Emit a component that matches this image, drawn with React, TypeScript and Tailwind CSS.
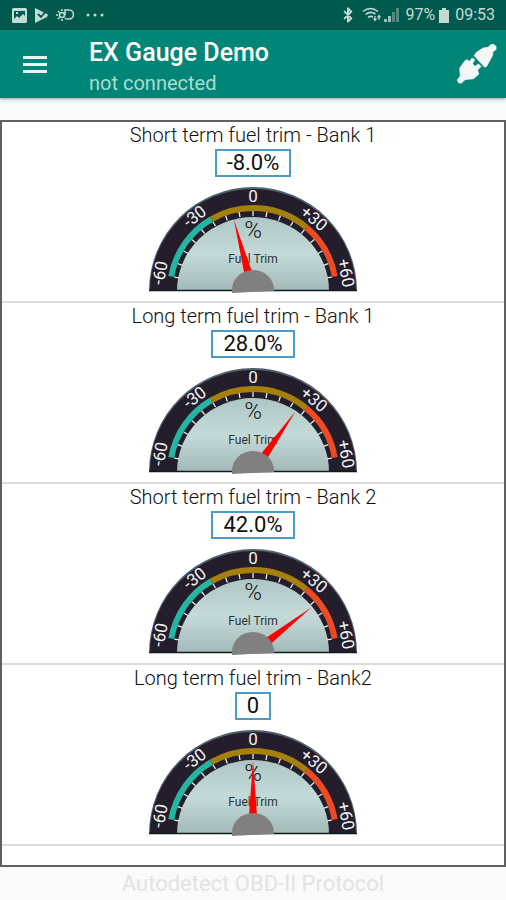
import { Bluetooth } from "lucide-react";

type Reading = {
  title: string;
  value: string;
  // degrees from vertical
  needle: number;
};

const readings: Reading[] = [
  { title: "Short term fuel trim - Bank 1", value: "-8.0%", needle: -15 },
  { title: "Long term fuel trim - Bank 1", value: "28.0%", needle: 35 },
  { title: "Short term fuel trim - Bank 2", value: "42.0%", needle: 52 },
  { title: "Long term fuel trim - Bank2", value: "0", needle: 0 },
];

const scale = [
  { label: "-60", angle: -79 },
  { label: "-30", angle: -38 },
  { label: "0", angle: 0 },
  { label: "+30", angle: 40 },
  { label: "+60", angle: 79 },
];

const ticks = Array.from({ length: 17 }, (_, i) => (i - 8) * 10);

const CX = 104;
const CY = 104;

function arc(from: number, to: number, r: number) {
  const point = (deg: number) => {
    const a = (deg * Math.PI) / 180;
    return `${CX + r * Math.sin(a)} ${CY - r * Math.cos(a)}`;
  };
  return `M${point(from)} A${r} ${r} 0 0 1 ${point(to)}`;
}

function Gauge({ needle }: { needle: number }) {
  return (
    <svg
      viewBox="0 0 208 106"
      className="mt-2.5 h-[106px] w-52 overflow-visible"
      role="img"
      aria-label="Fuel Trim gauge"
    >
      <defs>
        <linearGradient id="face" x1="0" y1="0" x2="0" y2="1">
          <stop offset="0" stopColor="#adc6c4" />
          <stop offset="0.5" stopColor="#c4dad8" />
          <stop offset="1" stopColor="#a3b9b7" />
        </linearGradient>
      </defs>
      <path d="M0 104 A104 104 0 0 1 208 104 Z" fill="#50616a" />
      <path d="M1 104 A103 102 0 0 1 207 104 Z" fill="#231d2c" />
      <path d="M28 104 A76 74 0 0 1 180 104 Z" fill="url(#face)" />
      <path d={arc(-80, -30, 83)} stroke="#25b5a3" strokeWidth="6" fill="none" />
      <path d={arc(-30, 40, 83)} stroke="#a5810c" strokeWidth="6" fill="none" />
      <path d={arc(40, 80, 83)} stroke="#ef4a22" strokeWidth="6" fill="none" />
      {ticks.map((deg) => (
        <path
          key={deg}
          d="M104 24 V29"
          stroke="#e6ecec"
          strokeWidth="1.3"
          transform={`rotate(${deg} ${CX} ${CY})`}
        />
      ))}
      {scale.map((s) => (
        <text
          key={s.label}
          x={CX}
          y="15"
          textAnchor="middle"
          fill="#f1f1f3"
          className="text-[17px]"
          transform={`rotate(${s.angle} ${CX} ${CY})`}
        >
          {s.label}
        </text>
      ))}
      <text x={CX} y="51" textAnchor="middle" fill="#15191a" className="text-[24px] font-light">
        %
      </text>
      <text x={CX} y="76" textAnchor="middle" fill="#2c3434" className="text-[12px]">
        Fuel Trim
      </text>
      <path d="M0 103.5 H208" stroke="#0f1c1c" strokeWidth="1.5" />
      <path
        d="M104 30 L108 86 H100 Z"
        fill="#ff0000"
        transform={`rotate(${needle} ${CX} ${CY})`}
      />
      <path d="M83 106 V103 A21 20 0 0 1 125 103 V104 Z" fill="#808080" />
    </svg>
  );
}

function StatusBar() {
  return (
    <div className="flex h-[30px] items-center justify-between bg-[#00594d] pl-3 pr-[11px] text-[#c3dad6]">
      <div className="flex items-center gap-2">
        <svg viewBox="0 0 15 15" className="size-[15px]">
          <path
            fill="currentColor"
            fillRule="evenodd"
            d="M1.5 0h12A1.5 1.5 0 0 1 15 1.5v12a1.5 1.5 0 0 1-1.5 1.5h-12A1.5 1.5 0 0 1 0 13.5v-12A1.5 1.5 0 0 1 1.5 0ZM2 3v8l3-3 2 2 4-4 2 2V3ZM4 4h2v2H4Z"
          />
        </svg>
        <svg viewBox="0 0 13 15" className="h-[15px] w-[13px]">
          <path d="M0 0 L13 6.5 L12 9 L0 15 Z" fill="currentColor" />
          <path d="M3 6 L6 9 L13 1" stroke="#00594d" strokeWidth="1.8" fill="none" />
        </svg>
        <svg
          viewBox="0 0 18 14"
          className="h-3.5 w-[18px]"
          fill="none"
          stroke="currentColor"
          strokeWidth="1.6"
        >
          <circle cx="6" cy="7" r="2.5" />
          <path d="M6 1v2M6 11v2M0 7h2M2 3l1.5 1.5M2 11l1.5-1.5M9 10l1.5 1.5M8 2h5a4 4 0 0 1 0 9h-2M9 3v4" />
        </svg>
        <svg viewBox="0 0 18 4" className="ml-1 h-1 w-[18px]" fill="currentColor">
          <circle cx="2" cy="2" r="1.5" />
          <circle cx="9" cy="2" r="1.5" />
          <circle cx="16" cy="2" r="1.5" />
        </svg>
      </div>
      <div className="flex items-center">
        <Bluetooth className="size-4" strokeWidth={3} />
        <svg
          viewBox="0 0 20 16"
          className="ml-1.5 h-4 w-5"
          fill="none"
          stroke="currentColor"
          strokeWidth="1.6"
        >
          <path d="M1 4.5Q8.5-1.5 16 4.5M3.5 7.5Q8.5 3.5 13.5 7M6 10.5Q8.5 8.5 11 10" />
          <path d="M13 9v4M11.5 11.5 13 13.5l1.5-2M17 13V9M15.5 10.5 17 8.5l1.5 2" strokeWidth="1.2" />
        </svg>
        <svg viewBox="0 0 15 14" className="ml-0.5 h-3.5 w-[15px]" fill="currentColor">
          <path d="M0 11h3v3H0zM4 8h3v6H4z" opacity="0.8" />
          <path d="M8 4h3v10H8zM12 0h3v14h-3z" opacity="0.4" />
        </svg>
        <span className="ml-1.5 text-[16px]">97%</span>
        <svg viewBox="0 0 10 15" className="ml-1 h-[15px] w-2.5" fill="currentColor">
          <path d="M3 0h4v2h3v13H0V2h3z" />
        </svg>
        <span className="ml-1.5 text-[16px]">09:53</span>
      </div>
    </div>
  );
}

export default function App() {
  return (
    <div className="flex min-h-screen flex-col bg-[#fafafa] font-['Roboto',sans-serif]">
      <StatusBar />
      <header className="flex h-[68px] items-center bg-[#008577] pl-[23px] pr-[9px] shadow-[0_1px_3px_rgba(0,0,0,0.4)]">
        <button aria-label="Menu" className="flex w-6 flex-col gap-1">
          <span className="h-[3px] bg-[#e8f5f3]" />
          <span className="h-[3px] bg-[#e8f5f3]" />
          <span className="h-[3px] bg-[#e8f5f3]" />
        </button>
        <div className="ml-[42px] flex-1 pt-2">
          <h1 className="text-[25px] font-medium leading-[30px] text-white">EX Gauge Demo</h1>
          <p className="text-[20px] leading-[30px] text-[#a8dcd5]">not connected</p>
        </div>
        <button aria-label="Connect">
          <svg viewBox="0 0 40 40" className="size-10" fill="#f4f7f6" stroke="#f4f7f6" strokeWidth="0.8">
            <path d="M34 0.500h3l2 2v3l-3 2-.5 4-6 11-2 .5L17.300 11.700 19 8.700l6.700-4.500 5.500-.9Z" />
            <path d="M8 16.700l2-1 2.500 1.800 2.500-3.500 2.700 1.700-2.200 4 2.500 2.800 3.500-2.500 2.500 2.500-3.500 3.500 1.300 4-5.300 4.700-8.300.8-4 3.700-2.700-.5-1.200-2.700 3-4-.6-7.700Z" />
          </svg>
        </button>
      </header>

      <main className="mt-[22px] flex-1 border-2 border-[#606060] bg-white">
        {readings.map((r) => (
          <section
            key={r.title}
            className="flex h-[181px] flex-col items-center border-b-2 border-[#dcdcdc]"
          >
            <h2 className="text-[20px] font-light leading-[27px] text-[#111]">{r.title}</h2>
            <output className="border-2 border-[#4a9cc4] px-2.5 text-[22px] leading-6 text-[#111]">
              {r.value}
            </output>
            <Gauge needle={r.needle} />
          </section>
        ))}
      </main>
      <footer className="h-[33px] text-center text-[22px] leading-[33px] text-[#e2e2e2]">
        Autodetect OBD-II Protocol
      </footer>
    </div>
  );
}
